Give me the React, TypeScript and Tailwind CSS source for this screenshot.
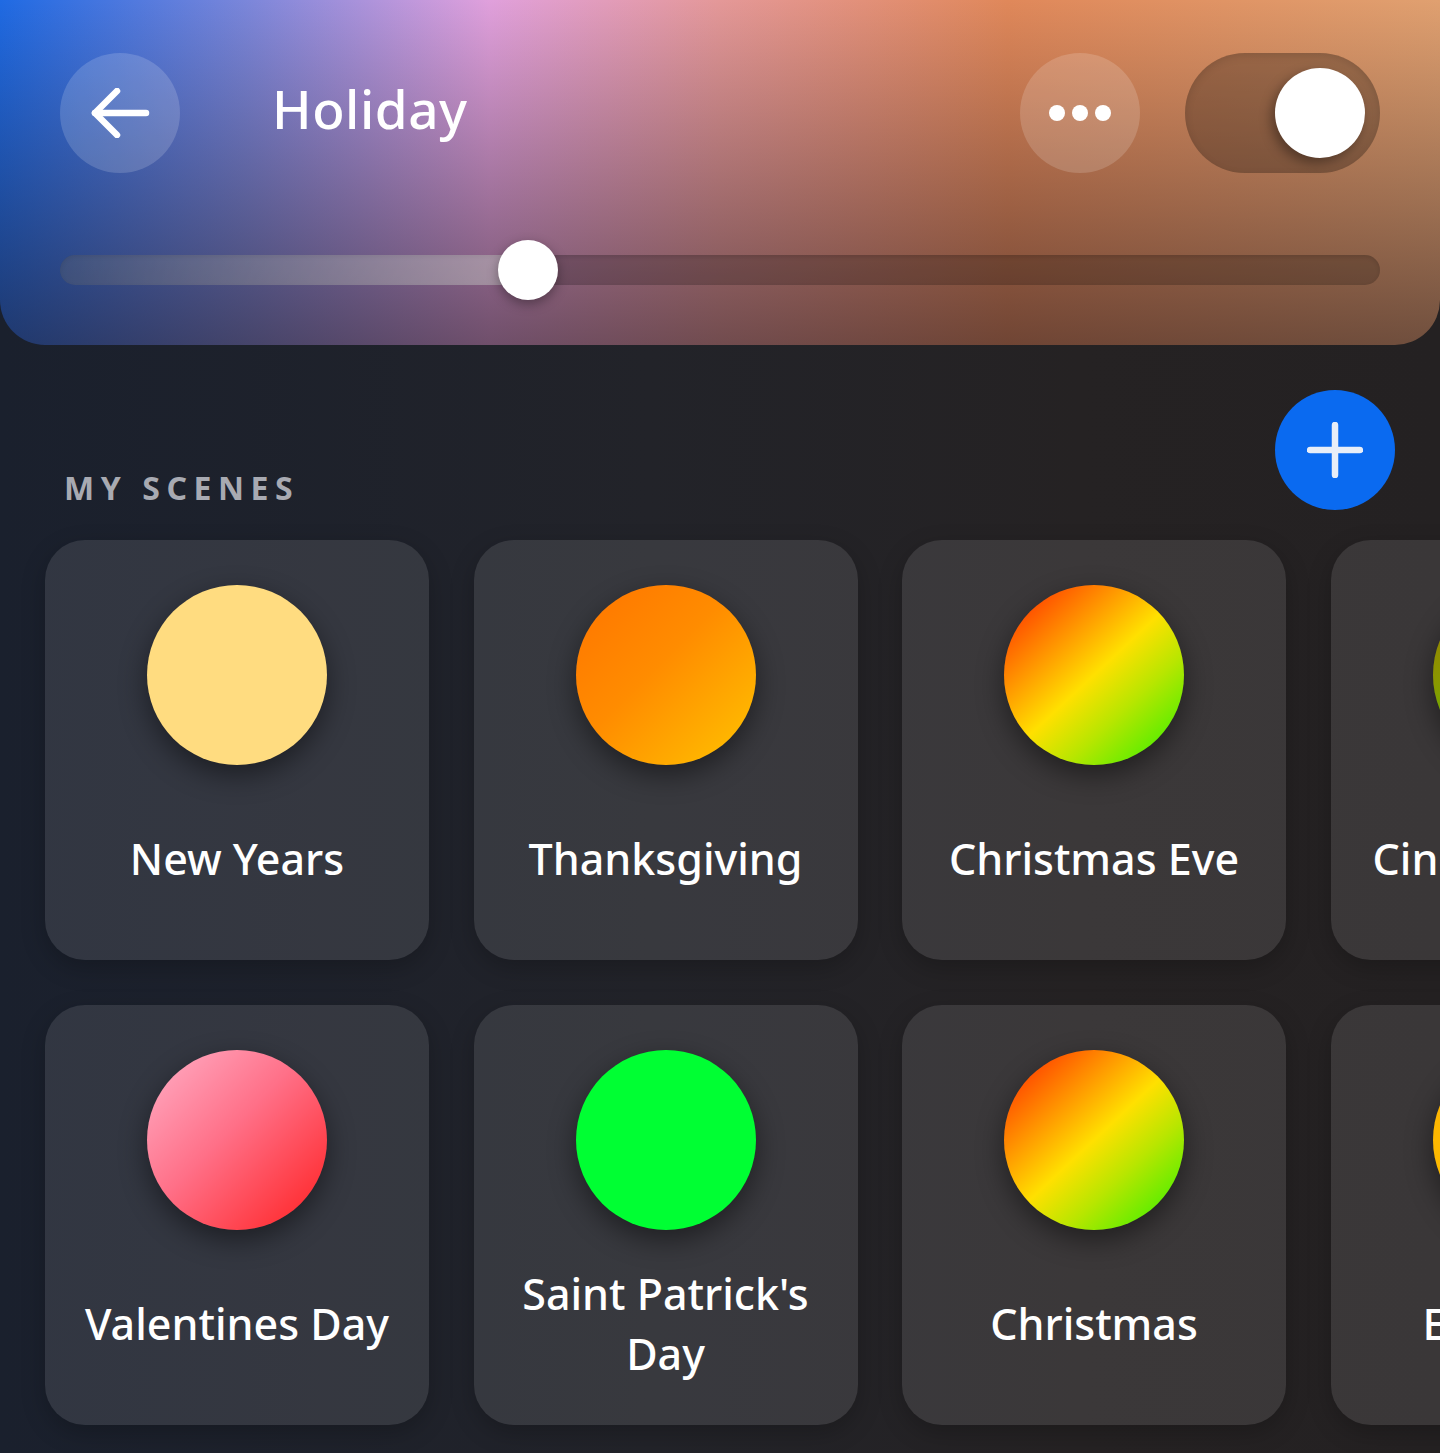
import React from "react";

type Scene = { name: string; circle: string };

const scenes: Scene[] = [
  { name: "New Years", circle: "bg-[#ffdc80]" },
  { name: "Thanksgiving", circle: "bg-[linear-gradient(135deg,#ff7400_0%,#ff8c00_45%,#ffc400_100%)]" },
  { name: "Christmas Eve", circle: "bg-[linear-gradient(137deg,#ff3c00_8%,#ff9a00_32%,#ffe000_50%,#b8e600_68%,#3cf000_95%)]" },
  { name: "Cinco de Mayo", circle: "bg-[linear-gradient(150deg,#9a7400_0%,#8a9800_35%,#50c000_65%,#18d040_100%)]" },
  { name: "Valentines Day", circle: "bg-[linear-gradient(135deg,#ffb0c8_0%,#ff7088_45%,#ff1e1e_100%)]" },
  { name: "Saint Patrick's Day", circle: "bg-[#00ff33]" },
  { name: "Christmas", circle: "bg-[linear-gradient(137deg,#ff3c00_8%,#ff9a00_32%,#ffe000_50%,#b8e600_68%,#3cf000_95%)]" },
  { name: "Earth Day", circle: "bg-[linear-gradient(135deg,#ffb000_0%,#ffd000_100%)]" },
];

function SceneCard({ scene }: { scene: Scene }) {
  return (
    <div className="w-[384px] h-[420px] rounded-[40px] bg-white/[0.1] shadow-[0_8px_24px_rgba(0,0,0,0.22)] flex flex-col items-center pt-[45px]">
      <div className={`w-[180px] h-[180px] rounded-full shrink-0 shadow-[0_10px_28px_rgba(0,0,0,0.45)] ${scene.circle}`} />
      <div className="flex-1 w-full flex items-center justify-center pb-[8px] px-[20px]">
        <span className="text-[43px] leading-[60px] font-medium text-white text-center whitespace-nowrap">
          {scene.name === "Saint Patrick's Day" ? (
            <>
              Saint Patrick's
              <br />
              Day
            </>
          ) : (
            scene.name
          )}
        </span>
      </div>
    </div>
  );
}

export default function App() {
  return (
    <div
      className="w-[1440px] h-[1453px] overflow-hidden bg-[linear-gradient(90deg,#1a202d_0%,#222329_45%,#252223_75%,#242122_100%)]"
      style={{ fontFamily: '"Noto Sans", "Open Sans", sans-serif' }}
    >
      {/* Header */}
      <div className="h-[345px] rounded-b-[45px] px-[60px] pt-[53px] bg-[linear-gradient(180deg,rgba(30,20,25,0)_0%,rgba(30,20,25,0.58)_100%),linear-gradient(90deg,#1f6ae3_0%,#7a86da_17%,#e0a0dc_34%,#e49898_50%,#e0885a_70%,#e0a070_100%)]">
        <div className="h-[120px] flex items-center">
          <button className="w-[120px] h-[120px] rounded-full bg-white/[0.16] flex items-center justify-center shrink-0">
            <svg width="60" height="50" viewBox="0 0 60 50" fill="none" stroke="white" strokeWidth="6.5" strokeLinecap="round" strokeLinejoin="round">
              <path d="M27 3 L5 25 L27 47" />
              <path d="M5 25 H56" />
            </svg>
          </button>
          <h1 className="ml-[92px] mb-[10px] text-[53px] leading-none font-medium tracking-[0.01em] text-white">Holiday</h1>
          <div className="flex-1" />
          <button className="w-[120px] h-[120px] rounded-full bg-white/[0.16] flex items-center justify-center gap-[7px] shrink-0">
            <span className="w-[16px] h-[16px] rounded-full bg-white" />
            <span className="w-[16px] h-[16px] rounded-full bg-white" />
            <span className="w-[16px] h-[16px] rounded-full bg-white" />
          </button>
          <div className="ml-[45px] w-[195px] h-[120px] rounded-full bg-black/[0.26] shadow-[inset_0_3px_8px_rgba(0,0,0,0.12)] flex items-center justify-end pr-[15px] shrink-0">
            <div className="w-[90px] h-[90px] rounded-full bg-white shadow-[-4px_5px_12px_rgba(0,0,0,0.35)]" />
          </div>
        </div>
        {/* Slider */}
        <div className="mt-[67px] h-[60px] flex items-center">
          <div className="w-full h-[30px] rounded-full bg-black/[0.2] shadow-[inset_0_2px_4px_rgba(0,0,0,0.12)] flex items-center">
            <div className="w-[468px] h-[30px] rounded-l-full bg-[linear-gradient(90deg,rgba(255,255,255,0.12)_0%,rgba(255,255,255,0.4)_100%)]" />
            <div className="w-[60px] h-[60px] rounded-full bg-white -ml-[30px] shadow-[0_4px_12px_rgba(0,0,0,0.35)] shrink-0" />
          </div>
        </div>
      </div>

      {/* My scenes header */}
      <div className="mt-[45px] h-[120px] flex items-end justify-between pl-[64px] pr-[45px]">
        <span className="mb-[6px] text-[32px] leading-none font-bold tracking-[0.205em] text-[#a8aab2]">MY SCENES</span>
        <button className="w-[120px] h-[120px] rounded-full bg-[#0a6af0] flex items-center justify-center">
          <svg width="56" height="56" viewBox="0 0 56 56" fill="none" stroke="#e8eef8" strokeWidth="6.5" strokeLinecap="round">
            <path d="M28 3 V53" />
            <path d="M3 28 H53" />
          </svg>
        </button>
      </div>

      {/* Cards */}
      <div className="mt-[30px] pl-[45px] grid grid-cols-[repeat(4,384px)] gap-x-[44.5px] gap-y-[45px]">
        {scenes.map((s) => (
          <SceneCard key={s.name} scene={s} />
        ))}
      </div>
    </div>
  );
}
